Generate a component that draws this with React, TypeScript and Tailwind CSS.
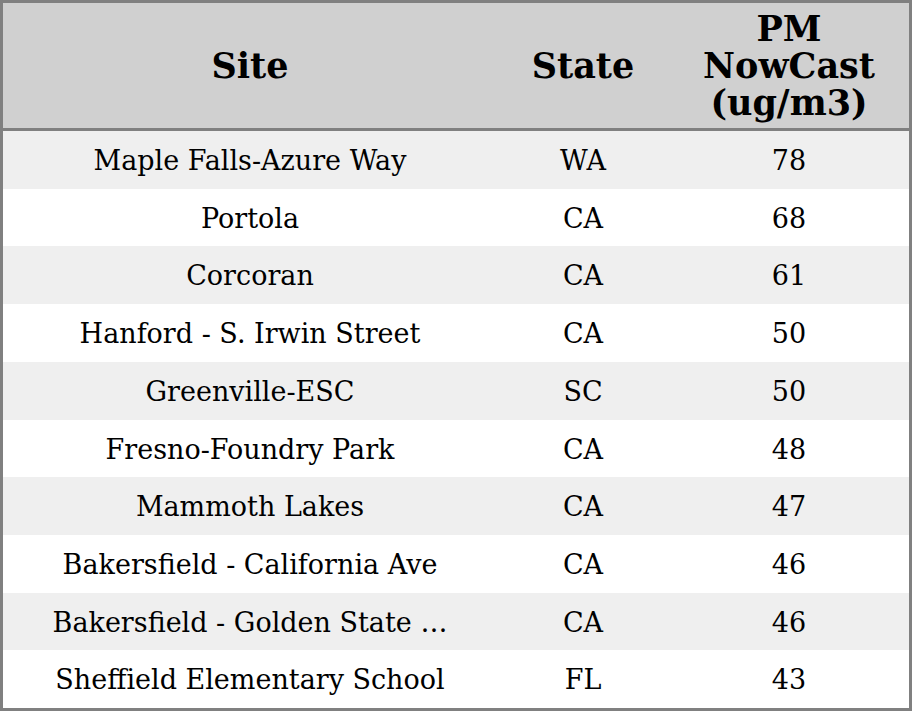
const rows = [
  { site: "Maple Falls-Azure Way", state: "WA", pm: 78 },
  { site: "Portola", state: "CA", pm: 68 },
  { site: "Corcoran", state: "CA", pm: 61 },
  { site: "Hanford - S. Irwin Street", state: "CA", pm: 50 },
  { site: "Greenville-ESC", state: "SC", pm: 50 },
  { site: "Fresno-Foundry Park", state: "CA", pm: 48 },
  { site: "Mammoth Lakes", state: "CA", pm: 47 },
  { site: "Bakersfield - California Ave", state: "CA", pm: 46 },
  { site: "Bakersfield - Golden State …", state: "CA", pm: 46 },
  { site: "Sheffield Elementary School", state: "FL", pm: 43 },
];

export default function App() {
  return (
    <div className="w-[912px] h-[711px] bg-white font-['DejaVu_Serif',serif] text-black">
      <div className="w-full h-full border-[3px] border-[#808080] flex flex-col">
        <div className="h-[128px] shrink-0 grid grid-cols-[494px_172px_1fr] items-center bg-[#d0d0d0] border-b-[3px] border-[#808080] text-[35px] leading-[37px] font-bold text-center">
          <div>Site</div>
          <div>State</div>
          <div>PM<br />NowCast<br />(ug/m3)</div>
        </div>
        <div className="flex-1 grid grid-rows-10">
          {rows.map((r, i) => (
            <div
              key={i}
              className={`grid grid-cols-[494px_172px_1fr] items-center text-center text-[27px] pt-[3px] ${i % 2 === 0 ? "bg-[#efefef]" : "bg-white"}`}
            >
              <div>{r.site}</div>
              <div>{r.state}</div>
              <div>{r.pm}</div>
            </div>
          ))}
        </div>
      </div>
    </div>
  );
}
